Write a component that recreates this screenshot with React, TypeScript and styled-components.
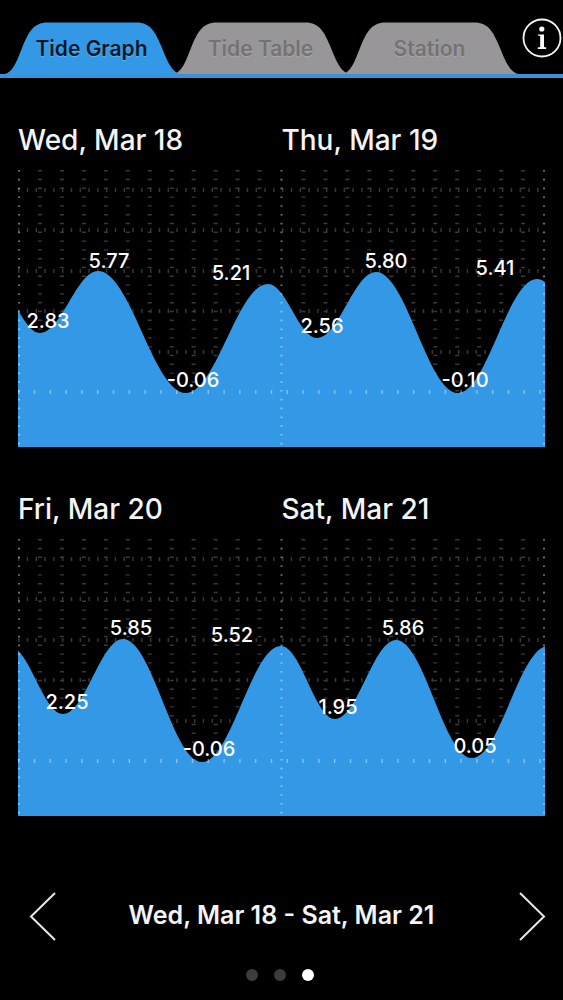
import React, { useState } from "react";
import styled, { createGlobalStyle } from "styled-components";

const GlobalStyle = createGlobalStyle`
  * { box-sizing: border-box; }
  body {
    margin: 0;
    background: #000;
    color: #f4f4f4;
    font-family: Inter, "Liberation Sans", sans-serif;
  }
  button {
    border: 0;
    padding: 0;
    background: none;
    color: inherit;
    font: inherit;
    cursor: pointer;
  }
`;

const BLUE = "#3399e6";
const CHART_W = 527;
const CHART_H = 278;

const Screen = styled.div`
  display: flex;
  flex-direction: column;
  min-height: 100vh;
`;

const Header = styled.header`
  display: grid;
  grid-template-columns: 1fr 48px;
  padding: 22px 0 0 8px;
  border-bottom: 4px solid #3a92d8;
`;

const TabList = styled.div`
  display: grid;
  grid-template-columns: repeat(3, 1fr);
`;

const Tab = styled.button<{ $active: boolean }>`
  position: relative;
  z-index: ${(p) => (p.$active ? 1 : 0)};
  height: 52px;
  padding-right: 1px;
  font-size: 21px;
  font-weight: 600;
  line-height: 54px;
  color: ${(p) => (p.$active ? "#04172b" : "#747275")};
  text-shadow: 0 1px 1px ${(p) => (p.$active ? "#63b4f0" : "#acaaac")};
`;

const TabShape = styled.svg<{ $active: boolean }>`
  position: absolute;
  top: 0;
  left: -6px;
  width: calc(100% + 10px);
  height: 52px;
  fill: ${(p) => (p.$active ? BLUE : "#989698")};
`;

const TabLabel = styled.span`
  position: relative;
  display: block;
  margin-right: 1px;
`;

const InfoButton = styled.button`
  justify-self: end;
  align-self: start;
  width: 40px;
  height: 40px;
  margin: -4px 1px 0 0;

  svg { display: block; }
`;

const Graphs = styled.main`
  display: flex;
  flex-direction: column;
  gap: 45px;
  padding: 45px 18px 0;
`;

const Days = styled.div`
  display: grid;
  grid-template-columns: 1fr 1fr;
  margin-bottom: 12px;
`;

const Day = styled.h2`
  margin: 0;
  font-size: 28px;
  font-weight: 500;
  line-height: 34px;
  white-space: nowrap;
`;

const Plot = styled.svg`
  display: block;
  width: 100%;
  height: auto;
`;

const Value = styled.text`
  fill: #fff;
  font-size: 20px;
  font-weight: 500;
  text-anchor: middle;
`;

const RangeNav = styled.nav`
  display: flex;
  align-items: center;
  justify-content: space-between;
  padding: 76px 17px 0 29px;
`;

const Arrow = styled.button`
  width: 28px;
  height: 49px;

  svg { display: block; }
`;

const Range = styled.p`
  margin: 0;
  padding: 0 12px 4px 0;
  font-size: 25px;
  font-weight: 600;
  line-height: 30px;
  white-space: nowrap;
`;

const Pager = styled.div`
  display: flex;
  justify-content: center;
  gap: 16px;
  padding: 28px 4px 19px 0;
`;

const Dot = styled.button<{ $active: boolean }>`
  width: 12px;
  height: 12px;
  border-radius: 50%;
  background: ${(p) => (p.$active ? "#fff" : "#3c3b3e")};
`;

type Point = [number, number];
type Label = [text: string, x: number, y: number];

interface Graph {
  days: [string, string];
  extremes: Point[];
  labels: Label[];
}

/* High and low waters, starting and ending just outside the plotted days. */
const graphs: Graph[] = [
  {
    days: ["Wed, Mar 18", "Thu, Mar 19"],
    extremes: [[-24, 115], [22, 164], [80, 102], [168, 224], [250, 115], [299, 169], [358, 103], [440, 224], [519, 110], [573, 165]],
    labels: [
      ["2.83", 30, 159], ["5.77", 91, 99], ["-0.06", 175, 218], ["5.21", 213, 111],
      ["2.56", 304, 164], ["5.80", 368, 99], ["-0.10", 447, 218], ["5.41", 477, 106],
    ],
  },
  {
    days: ["Fri, Mar 20", "Sat, Mar 21"],
    extremes: [[-9, 108], [45, 176], [105, 101], [184, 224], [263, 108], [317, 181], [378, 102], [454, 220], [530, 108]],
    labels: [
      ["2.25", 49, 171], ["5.85", 113, 97], ["-0.06", 191, 218], ["5.52", 214, 104],
      ["1.95", 320, 176], ["5.86", 385, 97], ["0.05", 457, 215],
    ],
  },
];

function tidePath(points: Point[]) {
  const [first, ...rest] = points;
  let previous = first;
  let d = `M${first[0]} ${CHART_H} V${first[1]}`;
  for (const point of rest) {
    const handle = (point[0] - previous[0]) * 0.37;
    d += ` C${previous[0] + handle} ${previous[1]} ${point[0] - handle} ${point[1]} ${point[0]} ${point[1]}`;
    previous = point;
  }
  return `${d} V${CHART_H} Z`;
}

const minorColumns = Array.from({ length: 23 }, (_, i) => i + 1).filter((i) => i !== 12);
const rows = [21, 61, 102, 142, 183];
const majorColumns = [1, CHART_W / 2, CHART_W - 1];

function TideGraph({ days, extremes, labels }: Graph) {
  return (
    <section>
      <Days>
        {days.map((day) => (
          <Day key={day}>{day}</Day>
        ))}
      </Days>
      <Plot viewBox={`0 0 ${CHART_W} ${CHART_H}`} role="img" aria-label={`Tide heights, ${days.join(" and ")}`}>
        <g stroke="#3a3a3a" strokeWidth="4" strokeDasharray="1.4 7.4">
          {minorColumns.map((i) => {
            const x = (i * CHART_W) / 24;
            return <line key={i} x1={x} x2={x} y1="1" y2={CHART_H} />;
          })}
          {rows.map((y) => (
            <line key={y} x1="0" x2={CHART_W} y1={y} y2={y} />
          ))}
        </g>
        <path d={tidePath(extremes)} fill={BLUE} />
        <g stroke="#fff" strokeOpacity="0.45" strokeDasharray="1.6 7.2">
          {majorColumns.map((x) => (
            <line key={x} x1={x} x2={x} y1="1" y2={CHART_H} strokeWidth="2" />
          ))}
        </g>
        <line
          x1="0"
          x2={CHART_W}
          y1="223"
          y2="223"
          stroke="#fff"
          strokeOpacity="0.4"
          strokeWidth="4"
          strokeDasharray="1.4 14.4"
        />
        {labels.map(([text, x, y]) => (
          <Value key={`${text}-${x}`} x={x} y={y}>
            {text}
          </Value>
        ))}
      </Plot>
    </section>
  );
}

const tabs = ["Tide Graph", "Tide Table", "Station"];

export default function App() {
  const [tab, setTab] = useState(0);
  const [page, setPage] = useState(2);

  return (
    <Screen>
      <GlobalStyle />
      <Header>
        <TabList role="tablist">
          {tabs.map((name, i) => (
            <Tab key={name} role="tab" aria-selected={i === tab} $active={i === tab} onClick={() => setTab(i)}>
              <TabShape $active={i === tab} viewBox="0 0 181 52" preserveAspectRatio="none" aria-hidden="true">
                <path d="M2 52 C11 51 15 39 21 24 C27 10 32 0.5 46 0.5 H136 C150 0.5 155 10 161 24 C167 39 172 51 181 52 Z" />
              </TabShape>
              <TabLabel>{name}</TabLabel>
            </Tab>
          ))}
        </TabList>
        <InfoButton aria-label="Information">
          <svg width="40" height="40" viewBox="0 0 40 40" aria-hidden="true">
            <circle cx="20" cy="20" r="18.5" fill="none" stroke="#f4f4f4" strokeWidth="1.8" />
            <circle cx="19.8" cy="11" r="2.6" fill="#fff" />
            <path d="M16 16.4 H22 V29 L24.2 29.6 V31 H15.8 V29.6 L18.2 29 V18 L16 17.6 Z" fill="#fff" />
          </svg>
        </InfoButton>
      </Header>

      <Graphs>
        {graphs.map((graph) => (
          <TideGraph key={graph.days[0]} {...graph} />
        ))}
      </Graphs>

      <RangeNav aria-label="Date range">
        <Arrow aria-label="Previous days" onClick={() => setPage(Math.max(0, page - 1))}>
          <svg width="28" height="49" viewBox="0 0 28 49" fill="none" stroke="#e8e8e8" strokeWidth="2" aria-hidden="true">
            <path d="M26 1 L2 24.5 L26 48" />
          </svg>
        </Arrow>
        <Range>Wed, Mar 18 - Sat, Mar 21</Range>
        <Arrow aria-label="Next days" onClick={() => setPage(Math.min(2, page + 1))}>
          <svg width="28" height="49" viewBox="0 0 28 49" fill="none" stroke="#e8e8e8" strokeWidth="2" aria-hidden="true">
            <path d="M2 1 L26 24.5 L2 48" />
          </svg>
        </Arrow>
      </RangeNav>

      <Pager>
        {[0, 1, 2].map((i) => (
          <Dot key={i} aria-label={`Page ${i + 1}`} $active={i === page} onClick={() => setPage(i)} />
        ))}
      </Pager>
    </Screen>
  );
}
